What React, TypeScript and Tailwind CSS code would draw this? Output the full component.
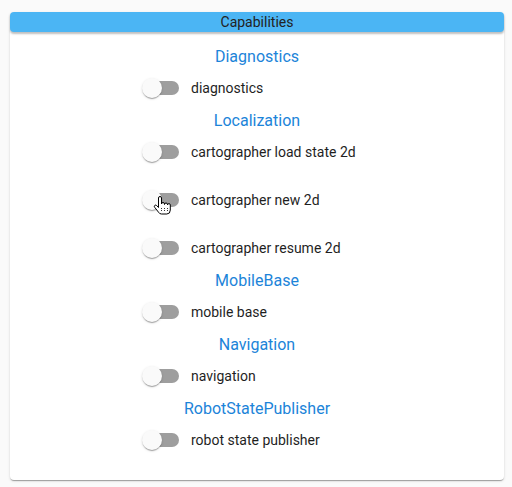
import React from "react";

type Group = { title: string; items: string[] };

const groups: Group[] = [
  { title: "Diagnostics", items: ["diagnostics"] },
  {
    title: "Localization",
    items: ["cartographer load state 2d", "cartographer new 2d", "cartographer resume 2d"],
  },
  { title: "MobileBase", items: ["mobile base"] },
  { title: "Navigation", items: ["navigation"] },
  { title: "RobotStatePublisher", items: ["robot state publisher"] },
];

function HandCursor() {
  return (
    <svg
      className="absolute left-[20px] top-[15px] pointer-events-none"
      width="18"
      height="19"
      viewBox="0 0 18 19"
    >
      <path
        d="M5.5 2 a1.5 1.5 0 0 1 3 0 V8 a1.5 1.5 0 0 1 3 0 V8.5 a1.5 1.5 0 0 1 3 0 V9 a1.4 1.4 0 0 1 2.8 0 V14 q0 4 -3.5 4 H8.5 q-2 0 -3 -1.8 L1.6 11.2 a1.3 1.3 0 0 1 2.1 -1.6 L5.5 11.5 Z"
        fill="#fff"
        stroke="#000"
        strokeWidth="1"
        strokeLinejoin="round"
      />
      <path d="M8.5 12 V15 M11.5 12 V15 M14.5 12 V15" stroke="#000" strokeWidth="0.8" strokeDasharray="1 1" />
    </svg>
  );
}

function Switch({ hover }: { hover?: boolean }) {
  return (
    <div className="relative w-[58px] h-[38px] shrink-0">
      <div className="absolute left-[12px] top-[12px] w-[34px] h-[14px] rounded-full bg-[#9e9e9e]" />
      <div className="absolute left-[9px] top-[9px] w-[20px] h-[20px] rounded-full bg-[#fafafa] shadow-[0_2px_1px_-1px_rgba(0,0,0,0.2),0_1px_1px_0_rgba(0,0,0,0.14),0_1px_3px_0_rgba(0,0,0,0.12)]" />
      {hover && <HandCursor />}
    </div>
  );
}

export default function App() {
  return (
    <div
      className="w-[512px] h-[487px] bg-[#fafafa] pt-[12px]"
      style={{ fontFamily: "Roboto, 'Liberation Sans', sans-serif" }}
    >
      <div className="ml-[10px] w-[494px] bg-white rounded-[4px] pb-[20px] shadow-[0_2px_1px_-1px_rgba(0,0,0,0.2),0_1px_1px_0_rgba(0,0,0,0.14),0_1px_3px_0_rgba(0,0,0,0.12)]">
        <div className="h-[20px] rounded-[4px] bg-[#4bb5f4] flex items-center justify-center text-[14px] text-[#222] shadow-[0_2px_2px_rgba(0,0,0,0.25)]">
          Capabilities
        </div>
        <div className="pt-[12px] flex flex-col">
          {groups.map((g) => (
            <div key={g.title} className="flex flex-col">
              <div className="h-[24px] leading-[26px] text-center text-[16px] text-[#1c84d9]">
                {g.title}
              </div>
              <div className="w-[248px] mx-auto flex flex-col gap-[8px]">
                {g.items.map((it) => (
                  <div key={it} className="h-[40px] flex items-center">
                    <Switch hover={it === "cartographer new 2d"} />
                    <span className="text-[14px] text-[#1f1f1f]">{it}</span>
                  </div>
                ))}
              </div>
            </div>
          ))}
        </div>
      </div>
    </div>
  );
}
